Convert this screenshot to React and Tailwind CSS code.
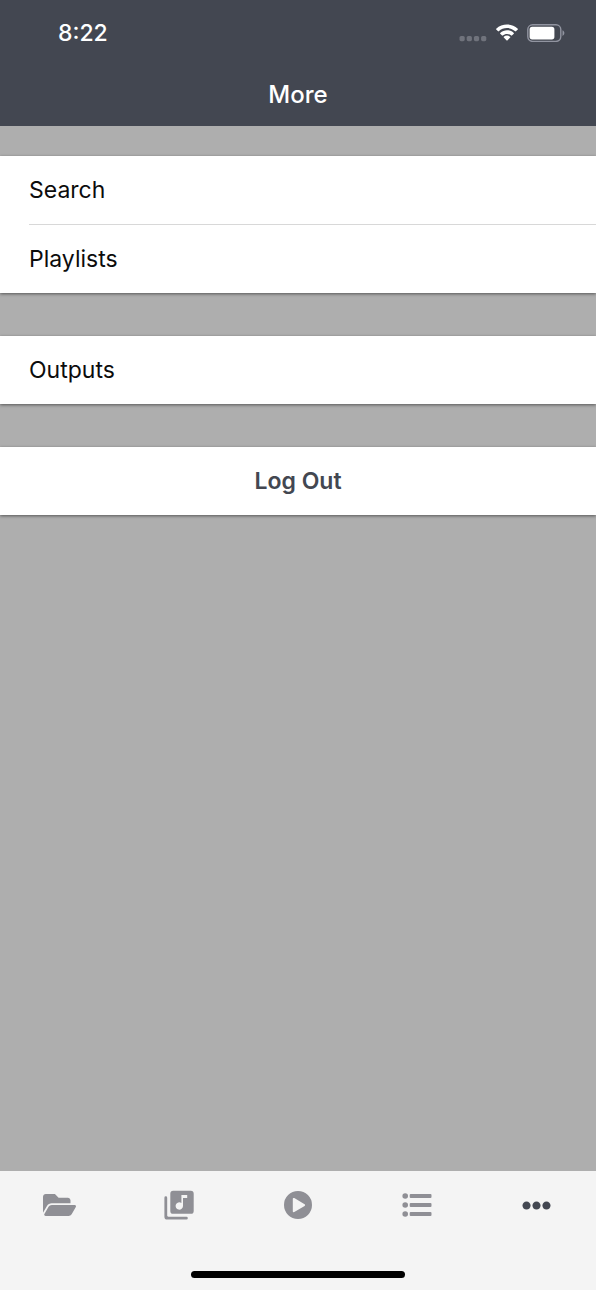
import React from "react";
import { FaFolderOpen, FaEllipsisH } from "react-icons/fa";

function StatusBar() {
  return (
    <div className="flex h-[66px] items-center justify-between pr-[31px] pl-[58px]">
      <span className="text-[23px] leading-8 font-medium">8:22</span>
      <div className="flex items-center gap-2">
        <svg className="mt-3 h-[6px] w-7 fill-[#70737c]" viewBox="0 0 28 6" aria-hidden="true">
          <rect x="0.500" y="0" width="5.2" height="5.2" rx="1.6" />
          <rect x="7.700" y="0" width="5.2" height="5.2" rx="1.6" />
          <rect x="14.900" y="0" width="5.2" height="5.2" rx="1.6" />
          <rect x="22.100" y="0" width="5.2" height="5.2" rx="1.6" />
        </svg>
        <svg className="h-[18px] w-6" viewBox="0 0 24 18" fill="white" aria-hidden="true">
          <path d="M12 4.1c3.1 0 6 1.200 8.200 3.200.2.2.5.2.7 0l1.900-1.900c.2-.2.2-.5 0-.7C16.800-.9 7.200-.9 1.200 4.700c-.2.2-.2.5 0 .7l1.900 1.900c.2.2.5.2.7 0C6 5.300 8.900 4.100 12 4.100z" />
          <path d="M12 10c1.600 0 3.100.6 4.200 1.600.2.2.5.2.7 0l1.900-1.900c.2-.2.2-.5 0-.7-3.900-3.600-9.700-3.600-13.600 0-.2.2-.2.5 0 .7l1.900 1.900c.2.2.5.2.7 0C8.900 10.600 10.400 10 12 10z" />
          <path d="M15.200 13.500c.2-.2.2-.5 0-.7-1.800-1.600-4.600-1.600-6.400 0-.2.200-.2.500 0 .7l2.900 3c.2.200.4.200.6 0z" />
        </svg>
        <svg className="h-[18px] w-[38px]" viewBox="0 0 38 18" aria-hidden="true">
          <rect x="0.8" y="0.8" width="33" height="16.6" rx="4.800" fill="none" stroke="#9194a0" strokeWidth="1.400" />
          <rect x="2.600" y="2.800" width="24.800" height="12.600" rx="2.600" fill="white" />
          <path d="M35.500 6.300v5.600c1.200-.5 1.900-1.600 1.900-2.800s-.7-2.300-1.900-2.800z" fill="#9194a0" />
        </svg>
      </div>
    </div>
  );
}

function LibraryIcon() {
  return (
    <svg className="size-[30px]" viewBox="0 0 30 30" fill="currentColor" aria-hidden="true">
      <path
        fillRule="evenodd"
        d="M9.200 0.800h17.600a2.900 2.900 0 0 1 2.900 2.900v17.200a2.900 2.900 0 0 1-2.900 2.900H9.200a2.900 2.900 0 0 1-2.900-2.900V3.700a2.900 2.900 0 0 1 2.900-2.900zM17.400 5v7.900a3.700 3.700 0 1 0 1.600 3V7.900h4.200V5z"
      />
      <path d="M0.400 7.700a1.400 1.400 0 0 1 2.800 0v17.900c0 .7.500 1.200 1.200 1.200h18a1.400 1.400 0 0 1 0 2.800H3.300a2.900 2.900 0 0 1-2.900-2.900z" />
    </svg>
  );
}

function PlayIcon() {
  return (
    <svg className="size-7" viewBox="0 0 28 28" fill="currentColor" aria-hidden="true">
      <path
        fillRule="evenodd"
        d="M14 0a14 14 0 1 1 0 28a14 14 0 0 1 0-28zM10.300 7.100c-.7-.4-1.500 0-1.500.9v12.200c0 .9.800 1.300 1.500.9l10.300-6.200c.7-.4.7-1.200 0-1.600z"
      />
    </svg>
  );
}

function ListIcon() {
  return (
    <svg className="h-6 w-[30px]" viewBox="0 0 30 24" fill="currentColor" aria-hidden="true">
      <circle cx="3.200" cy="3" r="2.800" />
      <circle cx="3.200" cy="12" r="2.800" />
      <circle cx="3.200" cy="21" r="2.800" />
      <rect x="7.700" y="0.900" width="21.800" height="4.200" rx="1" />
      <rect x="7.700" y="9.900" width="21.800" height="4.200" rx="1" />
      <rect x="7.700" y="18.900" width="21.800" height="4.200" rx="1" />
    </svg>
  );
}

function Group({ children }) {
  return (
    <section className="bg-white shadow-[0_1px_3px_rgba(0,0,0,0.5)]">{children}</section>
  );
}

function Row({ label, divided }) {
  return (
    <button type="button" className="block w-full pl-[29px] text-left">
      <span
        className={
          divided
            ? "flex h-[69px] items-center border-b border-[#d8d8d8]"
            : "flex h-[68px] items-center"
        }
      >
        {label}
      </span>
    </button>
  );
}

function Tab({ label, active, children }) {
  return (
    <button
      type="button"
      aria-label={label}
      aria-current={active ? "page" : undefined}
      className={
        active
          ? "flex h-[68px] flex-1 items-center justify-center text-[#434751]"
          : "flex h-[68px] flex-1 items-center justify-center text-[#8f8f95]"
      }
    >
      {children}
    </button>
  );
}

export default function App() {
  return (
    <div className="flex min-h-screen flex-col bg-[#aeaeae] font-['Inter',sans-serif] text-[23px] leading-8 text-[#0c0c0c]">
      <header className="bg-[#434751] text-white">
        <StatusBar />
        <h1 className="flex h-[60px] items-center justify-center pb-0.5 text-2xl font-medium">More</h1>
      </header>
      <main className="flex flex-1 flex-col gap-[43px] pt-[30px]">
        <Group>
          <Row label="Search" divided />
          <Row label="Playlists" />
        </Group>
        <Group>
          <Row label="Outputs" />
        </Group>
        <Group>
          <button type="button" className="h-[68px] w-full font-semibold text-[#434751]">
            Log Out
          </button>
        </Group>
      </main>
      <footer className="bg-[#f4f4f4] pb-3">
        <nav aria-label="Main" className="flex">
          <Tab label="Browse">
            <FaFolderOpen className="h-[30px] w-[33px]" />
          </Tab>
          <Tab label="Library">
            <LibraryIcon />
          </Tab>
          <Tab label="Playing">
            <PlayIcon />
          </Tab>
          <Tab label="Queue">
            <ListIcon />
          </Tab>
          <Tab label="More" active>
            <FaEllipsisH className="size-[29px]" />
          </Tab>
        </nav>
        <div className="mx-auto mt-8 h-[7px] w-[214px] rounded-full bg-black" />
      </footer>
    </div>
  );
}
